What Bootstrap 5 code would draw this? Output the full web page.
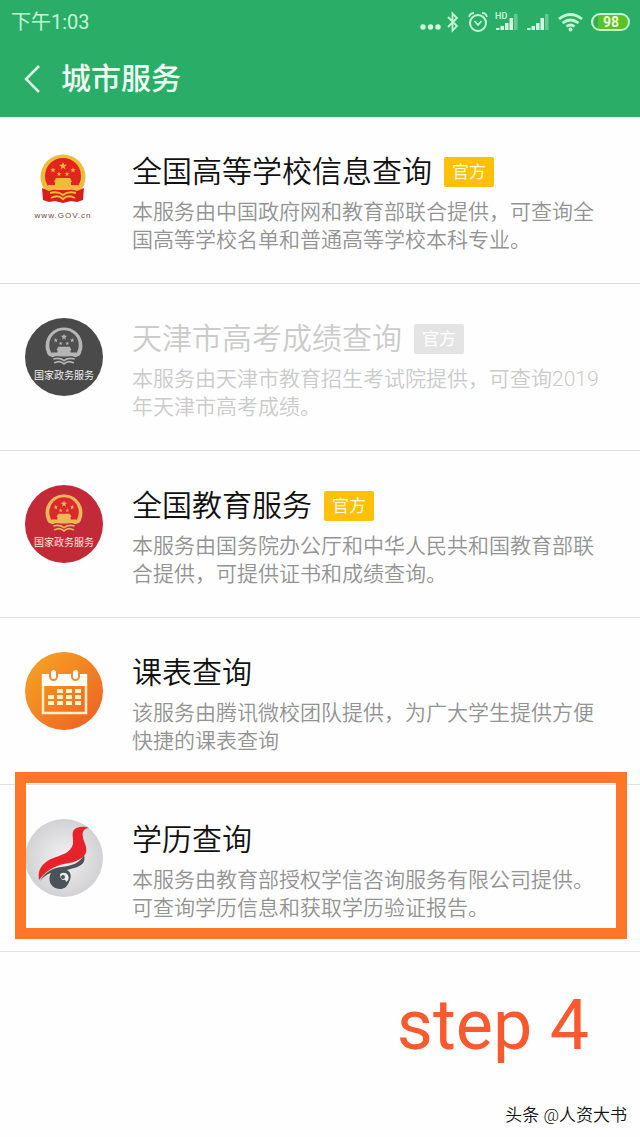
<!DOCTYPE html>
<html lang="zh-CN">
<head>
<meta charset="utf-8">
<meta name="viewport" content="width=device-width, initial-scale=1">
<title>城市服务</title>
<link href="https://cdn.jsdelivr.net/npm/bootstrap@5.3.0/dist/css/bootstrap.min.css" rel="stylesheet">
<style>
  body { font-family: Roboto, "Noto Sans CJK SC", sans-serif; background: #fefefe; color: #111; }
  .top-area { background: #2aae67; color: #f0fff4; }
  .status-row { height: 44px; padding: 0 9px 0 11px; font-size: 20px; color: #c4f5d4; }
  .status-row svg { display: block; }
  .title-row { height: 73px; padding: 0 24px 4px; gap: 21px; }
  .title-row h1 { font-size: 30px; line-height: 40px; font-weight: 500; }
  .back-btn { width: 16px; height: 40px; color: #d9fbe4; }
  .service { border-bottom: 1px solid #e2e2e2; }
  .service-link { padding: 34px 32px 29px 25px; gap: 29px; color: #111; }
  .service-icon { width: 78px; height: 78px; }
  .service-name { font-size: 30px; line-height: 42px; font-weight: 350; }
  .service-desc { font-size: 21px; line-height: 28px; font-weight: 350; color: #939393; margin-top: 5px; }
  .tag { width: 50px; height: 30px; border-radius: 2px; background: #ffc107; color: #fffbe0; font-size: 17px; line-height: 30px; font-weight: 400; }
  .is-off .service-name, .is-off .service-desc { color: #cbcbcb; }
  .is-off .tag { background: #e4e4e4; color: #fff; }
  .highlight-frame { position: absolute; top: -13px; bottom: 12px; left: 15px; right: 13px; border: 11px solid #ff7628; pointer-events: none; }
  .step-note { font-size: 70px; line-height: 80px; color: #f9592f; padding: 33px 51px 0 0; }
  .credit { font-size: 17px; line-height: 24px; color: #111; font-weight: 350; padding: 38px 13px 8px 0; }
</style>
</head>
<body>
<header class="top-area">
  <div class="status-row d-flex align-items-center justify-content-between">
    <span>下午1:03</span>
    <svg width="212" height="32" viewBox="0 0 212 32" fill="none" stroke="#c4f5d4" stroke-width="2" aria-hidden="true">
      <g fill="#d4fbe0" stroke="none"><circle cx="4" cy="21" r="2.7"/><circle cx="11.500" cy="21" r="2.700"/><circle cx="19" cy="21" r="2.7"/></g>
      <path d="M29 11l9 9-4.500 4.500V7.500L38 12l-9 9" stroke-width="1.800"/>
      <circle cx="59" cy="17" r="8"/><path d="M55.500 15l3.500 4 3.500-4M50 11q1-4 5-4M68 11q-1-4-5-4" stroke-width="1.800"/>
      <g fill="#d4fbe0" stroke="none">
        <text x="76" y="13" font-size="9" font-weight="500" font-family="Roboto, sans-serif">HD</text>
        <path d="M77 22h3.500v2H77zM81.500 20H85v4h-3.500zM86 17h3.500v7H86zM90.500 12H94v12h-3.500z"/><path d="M95 8h3.500v16H95z" opacity=".35"/>
        <path d="M108 22h3.500v2H108zM112.500 20h3.500v4h-3.500zM117 17h3.500v7H117zM121.500 12h3.500v12h-3.500z"/><path d="M126 8h3.500v16H126z" opacity=".35"/>
      </g>
      <path d="M140 13q11.500-9 23 0M143.500 17q8-6 16 0M147.500 20.500q4-3 8 0" stroke-width="2.800"/><circle cx="151.500" cy="23.500" r="2" fill="#c4f5d4" stroke="none"/>
      <rect x="173" y="8" width="37" height="16" rx="8" fill="#58c322"/>
      <path d="M179 10q-4 0-4 6t4 6z" fill="#2aae67" stroke="none"/>
      <text x="192" y="21" text-anchor="middle" font-size="14" font-weight="700" font-family="Roboto, sans-serif" fill="#f0ffe0" stroke="none">98</text>
    </svg>
  </div>
  <div class="title-row d-flex align-items-center">
    <button type="button" class="back-btn btn p-0 border-0 d-flex align-items-center" aria-label="返回">
      <svg width="16" height="30" viewBox="0 0 16 30" fill="none" stroke="currentColor" stroke-width="2.500"><path d="M15 2L2 15l13 13"/></svg>
    </button>
    <h1 class="m-0">城市服务</h1>
  </div>
</header>

<svg width="0" height="0" class="position-absolute" aria-hidden="true">
  <defs>
    <linearGradient id="sun" x1="0" y1="0" x2="1" y2="1"><stop offset="0" stop-color="#f7a823"/><stop offset="1" stop-color="#ee5c24"/></linearGradient>
    <radialGradient id="pearl"><stop offset="0" stop-color="#f2f2f4"/><stop offset="1" stop-color="#d2d2d5"/></radialGradient>
    <path id="star" d="M0-4L1-1.200 4-1.200 1.600.7 2.500 3.600 0 1.800-2.500 3.600-1.600.7-4-1.200-1-1.200z"/>
    <!-- state emblem; outer colour from --rim, inner disc from --disc, cloth from --drape -->
    <symbol id="emblem" viewBox="0 0 48 50">
      <circle cx="24" cy="23" r="22.500" fill="var(--rim)"/>
      <circle cx="24" cy="22" r="18" fill="var(--disc)"/>
      <g fill="var(--rim)">
        <use href="#star" x="24" y="12"/>
        <use href="#star" transform="translate(14 16) scale(.7)"/><use href="#star" transform="translate(34 16) scale(.7)"/>
        <use href="#star" transform="translate(20 20) scale(.6)"/><use href="#star" transform="translate(28 20) scale(.6)"/>
        <path d="M17 24h14l2 4H15zM16 28h16v3h7v5H9v-5h7z"/>
      </g>
      <path d="M3 34l7 3q7-3 14 1 7-4 14-1l7-3-1 12-6 2-6-1-8 2-8-2-6 1-6-2z" fill="var(--drape)"/>
      <path d="M11 39q8-2 13 2 5-4 13-2M12 44q7-4 12 1 5-5 12-1" fill="none" stroke="var(--rim)" stroke-width="2"/>
    </symbol>
  </defs>
</svg>

<main>
  <ul class="list-unstyled m-0">
    <li class="service">
      <a href="#" class="service-link d-flex text-decoration-none">
        <svg class="service-icon flex-shrink-0" viewBox="0 0 78 78" aria-hidden="true">
          <use href="#emblem" x="14" y="3" width="48" height="50" style="--rim:#edbd38;--disc:#e42320;--drape:#d81e1c"/>
          <text x="38" y="67" text-anchor="middle" font-size="8" letter-spacing="1" fill="#6b4a48" font-family="Liberation Sans, sans-serif">www.GOV.cn</text>
        </svg>
        <div>
          <div class="d-flex align-items-center gap-2"><h2 class="service-name m-0">全国高等学校信息查询</h2><span class="tag text-center ms-1">官方</span></div>
          <p class="service-desc mb-0">本服务由中国政府网和教育部联合提供，可查询全国高等学校名单和普通高等学校本科专业。</p>
        </div>
      </a>
    </li>
    <li class="service is-off">
      <a href="#" class="service-link d-flex text-decoration-none">
        <svg class="service-icon flex-shrink-0" viewBox="0 0 78 78" aria-hidden="true">
          <circle cx="39" cy="39" r="39" fill="#4a4a4a"/>
          <use href="#emblem" x="19" y="9" width="40" height="41" style="--rim:#b5b5b5;--disc:#505050;--drape:#4a4a4a"/>
          <text x="39" y="61" text-anchor="middle" font-size="10" fill="#eee" font-family="Noto Sans CJK SC, sans-serif">国家政务服务</text>
        </svg>
        <div>
          <div class="d-flex align-items-center gap-2"><h2 class="service-name m-0">天津市高考成绩查询</h2><span class="tag text-center ms-1">官方</span></div>
          <p class="service-desc mb-0">本服务由天津市教育招生考试院提供，可查询2019年天津市高考成绩。</p>
        </div>
      </a>
    </li>
    <li class="service">
      <a href="#" class="service-link d-flex text-decoration-none">
        <svg class="service-icon flex-shrink-0" viewBox="0 0 78 78" aria-hidden="true">
          <circle cx="39" cy="39" r="39" fill="#c22a38"/>
          <use href="#emblem" x="19" y="9" width="40" height="41" style="--rim:#efb75c;--disc:#d92a2c;--drape:#c22a38"/>
          <text x="39" y="61" text-anchor="middle" font-size="10" fill="#fbe6dc" font-family="Noto Sans CJK SC, sans-serif">国家政务服务</text>
        </svg>
        <div>
          <div class="d-flex align-items-center gap-2"><h2 class="service-name m-0">全国教育服务</h2><span class="tag text-center ms-1">官方</span></div>
          <p class="service-desc mb-0">本服务由国务院办公厅和中华人民共和国教育部联合提供，可提供证书和成绩查询。</p>
        </div>
      </a>
    </li>
    <li class="service">
      <a href="#" class="service-link d-flex text-decoration-none">
        <svg class="service-icon flex-shrink-0" viewBox="0 0 78 78" aria-hidden="true">
          <circle cx="39" cy="39" r="39" fill="url(#sun)"/>
          <rect x="18" y="24" width="43" height="37" fill="none" stroke="#fff0c8" stroke-width="2.500"/>
          <path d="M17 22h45v12H17z" fill="#fffdf5"/>
          <g fill="#fffdf5" stroke="#f28c25" stroke-width="2"><rect x="25" y="17" width="7" height="11" rx="3.500"/><rect x="47" y="17" width="7" height="11" rx="3.500"/></g>
          <path d="M32 37h6v4h-6zM41 37h6v4h-6zM50 37h6v4h-6zM23 43h6v4h-6zM32 43h6v4h-6zM41 43h6v4h-6zM50 43h6v4h-6zM23 49h6v4h-6zM32 49h6v4h-6zM41 49h6v4h-6zM50 49h6v4h-6z" fill="#fff2c4"/>
        </svg>
        <div>
          <h2 class="service-name m-0">课表查询</h2>
          <p class="service-desc mb-0">该服务由腾讯微校团队提供，为广大学生提供方便快捷的课表查询</p>
        </div>
      </a>
    </li>
    <li class="service position-relative">
      <a href="#" class="service-link d-flex text-decoration-none">
        <svg class="service-icon flex-shrink-0" viewBox="0 0 78 78" aria-hidden="true">
          <circle cx="39" cy="39" r="39" fill="url(#pearl)"/>
          <path d="M14 61C12 50 18 44 26 40 36 36 46 34 48 25c1-8-4-15 7-17q5-1 9 1c-8 1-7 7-5 13 4 9 3 14-4 18-6 4-13 4-20 6-9 3-15 7-21 15z" fill="#e8222a"/>
          <path d="M15 62c4-8 12-13 21-14 11-1 19-4 23-12 2 7-2 11-10 13l-7 2c4 2 5 7 2 12-2 5-5 7-9 7-9 0-13-9-9-16-4 1-8 4-11 8z" fill="#4a5357"/>
          <path d="M35 55q5-3 8 1 2 5-2 7 0-3-3-2-3-1-3-6z" fill="#ececee"/><circle cx="38" cy="58" r="2" fill="#4a5357"/>
        </svg>
        <div>
          <h2 class="service-name m-0">学历查询</h2>
          <p class="service-desc mb-0">本服务由教育部授权学信咨询服务有限公司提供。可查询学历信息和获取学历验证报告。</p>
        </div>
      </a>
      <div class="highlight-frame"></div>
    </li>
  </ul>
</main>
<footer class="text-end">
  <div class="step-note">step 4</div>
  <div class="credit">头条 @人资大书</div>
</footer>
<script src="https://cdn.jsdelivr.net/npm/bootstrap@5.3.0/dist/js/bootstrap.bundle.min.js"></script>
</body>
</html>
